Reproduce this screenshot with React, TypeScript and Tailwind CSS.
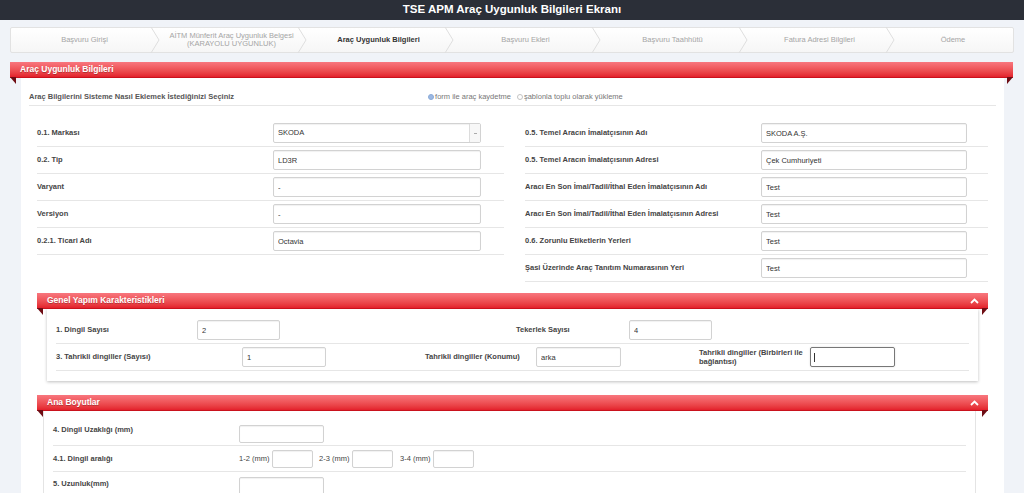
import React from "react";

type Step = { label: string; sub?: string; active?: boolean };

const steps: Step[] = [
  { label: "Başvuru Girişi" },
  { label: "AİTM Münferit Araç Uygunluk Belgesi", sub: "(KARAYOLU UYGUNLUK)" },
  { label: "Araç Uygunluk Bilgileri", active: true },
  { label: "Başvuru Ekleri" },
  { label: "Başvuru Taahhütü" },
  { label: "Fatura Adresi Bilgileri" },
  { label: "Ödeme" },
];

const leftFields = [
  { label: "0.1. Markası", value: "SKODA", select: true },
  { label: "0.2. Tip", value: "LD3R" },
  { label: "Varyant", value: "-" },
  { label: "Versiyon", value: "-" },
  { label: "0.2.1. Ticari Adı", value: "Octavia" },
];

const rightFields = [
  { label: "0.5. Temel Aracın İmalatçısının Adı", value: "SKODA A.Ş." },
  { label: "0.5. Temel Aracın İmalatçısının Adresi", value: "Çek Cumhuriyeti" },
  { label: "Aracı En Son İmal/Tadil/İthal Eden İmalatçısının Adı", value: "Test" },
  { label: "Aracı En Son İmal/Tadil/İthal Eden İmalatçısının Adresi", value: "Test" },
  { label: "0.6. Zorunlu Etiketlerin Yerleri", value: "Test" },
  { label: "Şasi Üzerinde Araç Tanıtım Numarasının Yeri", value: "Test" },
];

function TextBox({ value = "", className = "" }: { value?: string; className?: string }) {
  return (
    <input
      readOnly
      defaultValue={value}
      className={`h-[20px] px-[4px] text-[7.5px] font-normal text-[#333] bg-white border border-[#d2d2d2] rounded-[2px] shadow-[inset_0_1px_1px_rgba(0,0,0,0.06)] outline-none ${className}`}
    />
  );
}

function SelectBox({ value }: { value: string }) {
  return (
    <div className="flex h-[20px] w-[208px] bg-white border border-[#d2d2d2] rounded-[2px] shadow-[inset_0_1px_1px_rgba(0,0,0,0.06)]">
      <div className="flex-1 flex items-center px-[4px] text-[7.5px] text-[#333]">{value}</div>
      <div className="w-[11px] border-l border-[#dcdcdc] bg-[#f7f7f7] flex items-center justify-center">
        <div className="w-[3px] h-[1px] bg-[#aaa]" />
      </div>
    </div>
  );
}

function FieldRow({ label, value, select, inputWidth = "w-[208px]" }: { label: string; value: string; select?: boolean; inputWidth?: string }) {
  return (
    <div className="flex items-center h-[27px] border-b border-[#e6e6e6]">
      <div className="w-[236px] text-[7.5px] font-bold text-[#444]">{label}</div>
      {select ? <SelectBox value={value} /> : <TextBox value={value} className={inputWidth} />}
    </div>
  );
}

function Fold({ side }: { side: "left" | "right" }) {
  return (
    <svg
      width="6"
      height="7"
      viewBox="0 0 6 7"
      className={`absolute top-full ${side === "left" ? "left-0" : "right-0"}`}
    >
      {side === "left" ? (
        <polygon points="0,0 6,0 6,7" fill="#6e0d14" />
      ) : (
        <polygon points="0,0 6,0 0,7" fill="#6e0d14" />
      )}
    </svg>
  );
}

function ChevronUp() {
  return (
    <svg width="9" height="6" viewBox="0 0 9 6" className="mr-[9px]">
      <polyline points="1,5 4.5,1.5 8,5" fill="none" stroke="#fff" strokeWidth="1.8" />
    </svg>
  );
}

function RedHeader({ title, collapsible }: { title: string; collapsible?: boolean }) {
  return (
    <div className="relative h-[16px] flex items-center justify-between bg-linear-to-b from-[#f8767e] to-[#e31f2b] border-b border-[#c9121d]">
      <span className="pl-[10px] text-[8.5px] font-bold text-white [text-shadow:0_1px_0_rgba(0,0,0,0.25)]">
        {title}
      </span>
      {collapsible && <ChevronUp />}
      <Fold side="left" />
      <Fold side="right" />
    </div>
  );
}

function App() {
  return (
    <div className="min-h-screen w-[1024px] h-[493px] overflow-hidden bg-[#f0f3f8] font-['Liberation_Sans',Arial,sans-serif]">
      {/* Top bar */}
      <div className="h-[20px] bg-[#2b2f38] flex items-center justify-center">
        <h1 className="text-[11.5px] font-bold text-white">
          TSE APM Araç Uygunluk Bilgileri Ekranı
        </h1>
      </div>

      {/* Steps */}
      <div className="mx-[10px] mt-[7px] h-[26px] flex bg-linear-to-b from-white to-[#f6f6f6] border border-[#e2e2e2] rounded-[2px]">
        {steps.map((s, i) => (
          <div
            key={s.label}
            className={`relative flex flex-col items-center justify-center text-center leading-[8px] ${
              i === steps.length - 1 ? "flex-1" : "w-[147px]"
            } ${s.active ? "text-[7.5px] font-bold text-[#333]" : "text-[7.5px] text-[#a5a5a5]"}`}
          >
            <span>{s.label}</span>
            {s.sub && <span>{s.sub}</span>}
            {i < steps.length - 1 && (
              <svg width="10" height="26" viewBox="0 0 10 26" className="absolute -right-[2px] top-[-1px]">
                <polyline points="1,0 9,13 1,26" fill="none" stroke="#dedede" strokeWidth="1" />
              </svg>
            )}
          </div>
        ))}
      </div>

      {/* Main section */}
      <div className="mt-[9px] ml-[10px] mr-[11px]">
        <RedHeader title="Araç Uygunluk Bilgileri" />
        <div className="ml-[11px] mr-[9px] bg-white pt-[11px] pb-[20px]">
          <div className="mx-[8px] h-[17px] flex items-center border-b border-[#e6e6e6]">
            <div className="text-[7.5px] font-bold text-[#555]">
              Araç Bilgilerini Sisteme Nasıl Eklemek İstediğinizi Seçiniz
            </div>
            <div className="ml-[194px] flex items-center gap-[6px] text-[7.5px] text-[#777]">
              <label className="flex items-center gap-[1px]">
                <span className="w-[6px] h-[6px] rounded-full bg-[#9db9e3] border border-[#8aaad8]" />
                form ile araç kaydetme
              </label>
              <label className="flex items-center gap-[1px]">
                <span className="w-[6px] h-[6px] rounded-full bg-white border border-[#c4c4c4]" />
                şablonla toplu olarak yükleme
              </label>
            </div>
          </div>

          <div className="mx-[16px] mt-[14px] grid grid-cols-[467px_463px] gap-x-[21px] items-start">
            <div>
              {leftFields.map((f) => (
                <FieldRow key={f.label} {...f} />
              ))}
            </div>
            <div>
              {rightFields.map((f) => (
                <FieldRow key={f.label} {...f} inputWidth="w-[206px]" />
              ))}
            </div>
          </div>

          {/* Genel Yapım Karakteristikleri */}
          <div className="mx-[16px] mt-[11px]">
            <RedHeader title="Genel Yapım Karakteristikleri" collapsible />
            <div className="mx-[10px] bg-white shadow-[0_1px_3px_rgba(0,0,0,0.25)] pt-[8px] pb-[10px] px-[9px] text-[7.5px] font-bold text-[#444]">
              <div className="flex items-center h-[27px] border-b border-[#e6e6e6]">
                <div className="w-[141px]">1. Dingil Sayısı</div>
                <TextBox value="2" className="w-[83px]" />
                <div className="ml-[236px] w-[113px]">Tekerlek Sayısı</div>
                <TextBox value="4" className="w-[83px]" />
              </div>
              <div className="flex items-center h-[27px] border-b border-[#e6e6e6]">
                <div className="w-[186px]">3. Tahrikli dingiller (Sayısı)</div>
                <TextBox value="1" className="w-[84px]" />
                <div className="ml-[99px] w-[111px]">Tahrikli dingiller (Konumu)</div>
                <TextBox value="arka" className="w-[85px]" />
                <div className="ml-[78px] w-[111px] leading-[9px]">
                  Tahrikli dingiller (Birbirleri ile bağlantısı)
                </div>
                <div className="w-[85px] h-[20px] flex items-center px-[3px] border border-[#777] rounded-[2px] shadow-[0_0_2px_rgba(0,0,0,0.15)]">
                  <div className="w-[1px] h-[9px] bg-[#333]" />
                </div>
              </div>
            </div>
          </div>

          {/* Ana Boyutlar */}
          <div className="mx-[16px] mt-[14px]">
            <RedHeader title="Ana Boyutlar" collapsible />
            <div className="ml-[6px] mr-[12px] bg-white border-l border-r border-[#e4e4e4] pt-[6px] px-[9px] text-[7.5px] font-bold text-[#444]">
              <div className="flex items-start h-[29px] pt-[8px] border-b border-[#e6e6e6]">
                <div className="w-[186px] -mt-[1px]">4. Dingil Uzaklığı (mm)</div>
                <TextBox className="w-[85px] !h-[18px]" />
              </div>
              <div className="flex items-center h-[26px] border-b border-[#e6e6e6]">
                <div className="w-[186px]">4.1. Dingil aralığı</div>
                <span className="w-[33px] font-normal">1-2 (mm)</span>
                <TextBox className="w-[41px] !h-[18px]" />
                <span className="ml-[6px] w-[33px] font-normal">2-3 (mm)</span>
                <TextBox className="w-[41px] !h-[18px]" />
                <span className="ml-[7px] w-[33px] font-normal">3-4 (mm)</span>
                <TextBox className="w-[41px] !h-[18px]" />
              </div>
              <div className="flex items-start h-[30px] pt-[5px]">
                <div className="w-[186px] pt-[1px]">5. Uzunluk(mm)</div>
                <TextBox className="w-[85px] !h-[18px]" />
              </div>
            </div>
          </div>
        </div>
      </div>
    </div>
  );
}

export default App;
